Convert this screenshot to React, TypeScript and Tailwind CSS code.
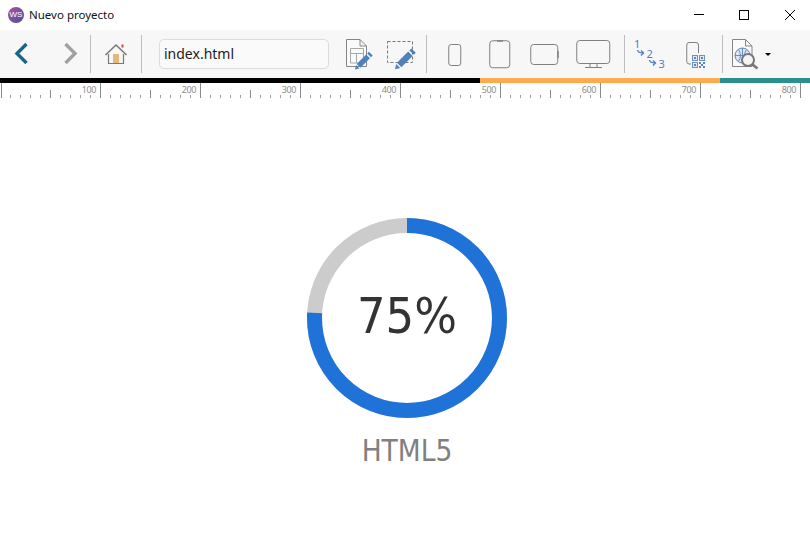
const uiFont = "font-['Noto_Sans',sans-serif]";

const rulerTicks = Array.from({ length: 82 }, (_, i) => i * 10);
const rulerLabels = [100, 200, 300, 400, 500, 600, 700, 800];

function Sep({ ml }: { ml: string }) {
  return <div className={`h-[38px] w-px shrink-0 bg-[#bdbdbd] ${ml}`} />;
}

function Pencil({ dx, dy, scale }: { dx: number; dy: number; scale: number }) {
  return (
    <g transform={`translate(${dx} ${dy}) scale(${scale})`}>
      <path d="M2.5 18.5 L16.5 4.5 L22 10 L8 24 Z" fill="#4f81bd" />
      <path d="M18 3 L20.5 0.5 L26 6 L23.5 8.5 Z" fill="#4f81bd" />
      <path d="M1.5 20 L0 26.5 L6.5 25 Z" fill="#4f81bd" />
    </g>
  );
}

function QrCell({ x, y }: { x: number; y: number }) {
  return (
    <g>
      <rect x={x + 0.5} y={y + 0.5} width="5" height="5" fill="#dfe7f1" stroke="#6f93bd" />
      <rect x={x + 2} y={y + 2} width="2" height="2" fill="#5d86b8" />
    </g>
  );
}

function Toolbar() {
  return (
    <div className="flex h-[48px] items-center bg-[#f7f7f7]">
      <svg className="ml-[12px] shrink-0" width="20" height="48" viewBox="0 0 20 48">
        <path d="M14.5 14 L5 23.5 L14.5 33" fill="none" stroke="#1a6585" strokeWidth="3.4" />
      </svg>
      <svg className="ml-[29px] shrink-0" width="20" height="48" viewBox="0 0 20 48">
        <path d="M4.5 14 L14 23.5 L4.5 33" fill="none" stroke="#a0a0a0" strokeWidth="3.4" />
      </svg>
      <Sep ml="ml-[9px]" />
      <svg className="ml-[13px] shrink-0" width="24" height="48" viewBox="0 0 24 48">
        <rect x="17.5" y="14.5" width="2" height="3" fill="#c8513f" />
        <rect x="9" y="24" width="6" height="10" fill="#e6b77c" />
        <path d="M4.5 24 V33.5 H19.5 V24" fill="none" stroke="#7a7a7a" strokeWidth="1.2" />
        <path d="M1.5 25 L12 15 L22.5 25" fill="none" stroke="#7a7a7a" strokeWidth="1.6" />
      </svg>
      <Sep ml="ml-[13px]" />
      <div
        className={`ml-[17px] flex h-[30px] w-[170px] shrink-0 items-center rounded-[5px] border border-[#dcdcdc] bg-[#fafafa] pb-[2px] pl-[4px] text-[14px] text-[#1c1c1c] ${uiFont}`}
      >
        index.html
      </div>
      <svg className="ml-[17px] shrink-0" width="30" height="48" viewBox="0 0 30 48">
        <path d="M0.5 9.5 H14 L20.5 16 V36.5 H0.5 Z M14 9.5 V16 H20.5" fill="#fafafa" stroke="#858585" />
        <path d="M4.5 18.5 H17.5 V33 H4.5 Z M4.5 23.5 H17.5 M10.5 23.5 V33" fill="none" stroke="#a8a8a8" />
        <Pencil dx={9} dy={21.5} scale={0.68} />
      </svg>
      <svg className="ml-[11px] shrink-0" width="30" height="48" viewBox="0 0 30 48">
        <rect x="0.5" y="11.5" width="25" height="21" fill="none" stroke="#777" strokeDasharray="3 2" />
        <Pencil dx={8} dy={18} scale={0.8} />
      </svg>
      <Sep ml="ml-[9px]" />
      <svg className="ml-[21px] shrink-0" width="14" height="48" viewBox="0 0 14 48">
        <rect x="0.75" y="14.5" width="12" height="21" rx="2.5" fill="none" stroke="#808080" />
      </svg>
      <svg className="ml-[27px] shrink-0" width="22" height="48" viewBox="0 0 22 48">
        <rect x="0.75" y="10.75" width="20" height="27" rx="3" fill="none" stroke="#808080" />
        <path d="M8 11 H14" stroke="#808080" strokeWidth="1.5" />
      </svg>
      <svg className="ml-[19px] shrink-0" width="29" height="48" viewBox="0 0 29 48">
        <rect x="0.75" y="14.5" width="27" height="20" rx="3" fill="none" stroke="#808080" />
        <path d="M28 21 V28" stroke="#808080" strokeWidth="1.5" />
      </svg>
      <svg className="ml-[17px] shrink-0" width="35" height="48" viewBox="0 0 35 48">
        <rect x="0.75" y="10.5" width="33" height="23" rx="3" fill="none" stroke="#808080" />
        <path d="M14 34 V37.5 M21 34 V37.5 M9 37.5 H26" fill="none" stroke="#808080" />
      </svg>
      <Sep ml="ml-[13px]" />
      <svg className="ml-[9px] shrink-0" width="32" height="48" viewBox="0 0 32 48">
        <g fill="#4f81bd" fontFamily="'Noto Sans', sans-serif" fontSize="11">
          <text x="0" y="17.5">1</text>
          <text x="12.5" y="28">2</text>
          <text x="24.5" y="38">3</text>
        </g>
        <path d="M3.5 20 Q4 23 9 23 M7 20.5 L9.5 23 L7 25.5" fill="none" stroke="#4f81bd" strokeWidth="1.4" />
        <path d="M15.5 30 Q16 33 21 33 M19 30.5 L21.5 33 L19 35.5" fill="none" stroke="#4f81bd" strokeWidth="1.4" />
      </svg>
      <svg className="ml-[20px] shrink-0" width="21" height="48" viewBox="0 0 21 48">
        <path d="M5 34 H3 A2.5 2.5 0 0 1 0.75 31.5 V15 A2.5 2.5 0 0 1 3 12.5 H10 A2.5 2.5 0 0 1 12.5 15 V23" fill="none" stroke="#808080" />
        <QrCell x={6} y={25} />
        <QrCell x={13} y={25} />
        <QrCell x={6} y={32} />
        <path d="M13 32 H15 V34 H13 Z M17 32 H19 V34 H17 Z M15 34 H17 V36 H15 Z M13 36 H15 V38 H13 Z M17 36 H19 V38 H17 Z" fill="#5d86b8" />
      </svg>
      <Sep ml="ml-[15px]" />
      <svg className="ml-[9px] shrink-0" width="28" height="48" viewBox="0 0 28 48">
        <path d="M0.5 9.5 H13.5 L20 16 V36.5 H0.5 Z M13.5 9.5 V16 H20" fill="#fafafa" stroke="#858585" />
        <circle cx="10.5" cy="25.5" r="7.5" fill="#dbe6f2" stroke="#5d86b8" />
        <path d="M3 25.5 H18 M10.5 18 V33 M6.5 19.5 Q10.5 25.5 6.5 31.5 M14.5 19.5 Q10.5 25.5 14.5 31.5" fill="none" stroke="#5d86b8" strokeWidth="0.9" />
        <circle cx="16" cy="30" r="6" fill="#f4f4f4" stroke="#777" strokeWidth="2" />
        <path d="M20.5 34.5 L25.5 38.5" stroke="#777" strokeWidth="2.6" />
      </svg>
      <div className="ml-[5px] h-0 w-0 shrink-0 border-x-[3px] border-t-[3px] border-x-transparent border-t-black" />
    </div>
  );
}

function Ruler() {
  return (
    <svg className="block" width="810" height="15" viewBox="0 0 810 15">
      {rulerTicks.map((x) => {
        const top = x % 100 === 0 ? 0 : x % 50 === 0 ? 7 : 12;
        const px = x === 0 ? 1 : x;
        return <rect key={x} x={px} y={top} width="1" height={15 - top} fill={x % 50 === 0 ? "#8a8a8a" : "#a0a0a0"} />;
      })}
      {rulerLabels.map((n) => (
        <text
          key={n}
          x={n - 4}
          y="10"
          textAnchor="end"
          fontSize="9"
          letterSpacing="-0.4"
          fill="#8c8c8c"
          fontFamily="'Noto Sans', sans-serif"
        >
          {n}
        </text>
      ))}
    </svg>
  );
}

export default function App() {
  return (
    <div className="flex h-[542px] w-[810px] flex-col overflow-hidden bg-white">
      <div className="flex h-[30px] shrink-0 items-center">
        <div className="ml-[8px] flex h-[16px] w-[16px] items-center justify-center rounded-full bg-[linear-gradient(135deg,#b0529a,#4a4f9f)] font-['Liberation_Sans',sans-serif] text-[8px] leading-none text-white">
          WS
        </div>
        <span className={`ml-[5px] text-[11.5px] text-[#111] ${uiFont}`}>Nuevo proyecto</span>
        <div className="ml-auto flex items-center">
          <svg className="mr-[35px]" width="10" height="10" viewBox="0 0 10 10">
            <rect x="0" y="4" width="10" height="1" fill="#000" />
          </svg>
          <svg className="mr-[36px]" width="10" height="10" viewBox="0 0 10 10">
            <rect x="0.5" y="0.5" width="9" height="9" fill="none" stroke="#000" />
          </svg>
          <svg className="mr-[15px]" width="10" height="10" viewBox="0 0 10 10">
            <path d="M0 0 L10 10 M10 0 L0 10" stroke="#000" strokeWidth="1" />
          </svg>
        </div>
      </div>
      <Toolbar />
      <div className="flex h-[5px] shrink-0">
        <div className="w-[480px] bg-black" />
        <div className="w-[240px] bg-[#fbab4e]" />
        <div className="w-[90px] bg-[#2b908c]" />
      </div>
      <Ruler />
      <div className="flex flex-1 flex-col items-center pl-[4px] pt-[120px]">
        <div className="relative h-[200px] w-[200px]">
          <svg width="200" height="200" viewBox="0 0 200 200" className="-rotate-90">
            <circle cx="100" cy="100" r="92.5" fill="none" stroke="#cccccc" strokeWidth="15" />
            <circle
              cx="100"
              cy="100"
              r="92.5"
              fill="none"
              stroke="#1e72d8"
              strokeWidth="15"
              pathLength="100"
              strokeDasharray="75.9 100"
            />
          </svg>
          <div className="absolute inset-0 flex items-center justify-center pb-[4px] font-['DejaVu_Sans',sans-serif] text-[50px] leading-none font-stretch-condensed text-[#333333]">
            75%
          </div>
        </div>
        <div className="mt-[14px] font-['DejaVu_Sans',sans-serif] text-[29.5px] leading-[38px] font-stretch-condensed text-[#808080]">
          HTML5
        </div>
      </div>
    </div>
  );
}
